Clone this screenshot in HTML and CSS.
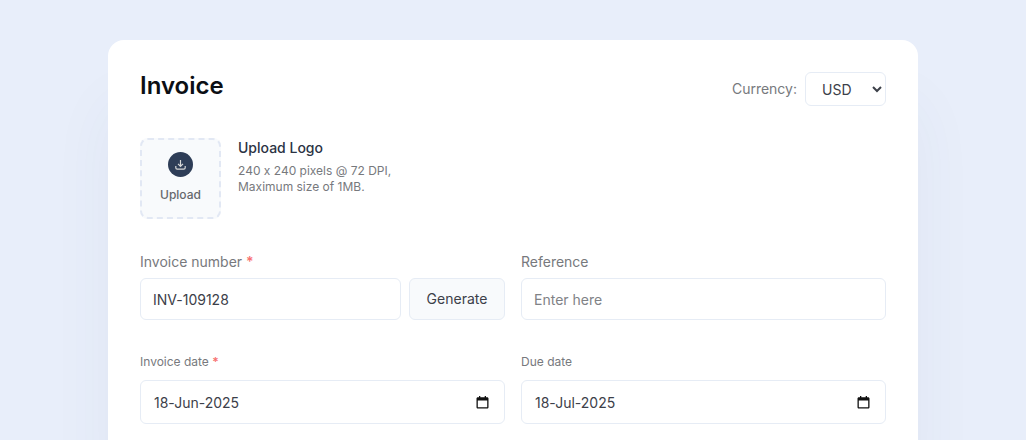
FILE: index.html
```
<!DOCTYPE html>
<html lang="en">

<head>
    <meta charset="UTF-8">
    <meta name="viewport" content="width=device-width, initial-scale=1.0">
    <title>Invoice</title>
    <link rel="stylesheet" href="styles.css">
</head>

<body>
    <form class="invoice">
        <header class="top">
            <h1>Invoice</h1>
            <div class="currency">
                <label for="currency">Currency:</label>
                <select id="currency">
                    <option>USD</option>
                    <option>EUR</option>
                    <option>GBP</option>
                </select>
            </div>
        </header>

        <section class="logo">
            <button type="button" class="upload">
                <svg width="25" height="25" viewBox="0 0 25 25" fill="none">
                    <circle cx="12.5" cy="12.5" r="12.5" fill="#2e3d57"/>
                    <path d="M12.5 8v6M10 11.8l2.5 2.5 2.5-2.5M7.8 14v1.7c0 .8.6 1.4 1.4 1.4h6.6c.8 0 1.4-.6 1.4-1.4V14" stroke="#d8d8d8" stroke-width="1.2"/>
                </svg>
                <span>Upload</span>
            </button>
            <div>
                <h2>Upload Logo</h2>
                <p>240 x 240 pixels @ 72 DPI,<br>Maximum size of 1MB.</p>
            </div>
        </section>

        <div class="row">
            <div class="field">
                <label for="number">Invoice number <span class="required">*</span></label>
                <div class="number">
                    <input id="number" type="text" value="INV-109128" required>
                    <button type="button" class="generate">Generate</button>
                </div>
            </div>
            <div class="field">
                <label for="reference">Reference</label>
                <input id="reference" type="text" placeholder="Enter here">
            </div>
        </div>

        <div class="row">
            <div class="field date">
                <label for="invoice-date">Invoice date <span class="required">*</span></label>
                <div class="date-box">
                    <input id="invoice-date" type="text" value="18-Jun-2025" required>
                    <button type="button" aria-label="Pick invoice date">
                        <svg width="13" height="13" viewBox="0 0 13 13">
                            <path d="M3 0h1.3v1.2h4.4V0H10v1.2h1.2c.7 0 1.3.6 1.3 1.3v8.7c0 .7-.6 1.3-1.3 1.3H1.8c-.7 0-1.3-.6-1.3-1.3V2.5c0-.7.6-1.3 1.3-1.3H3zM1.8 4.4v6.8h9.4V4.4z" fill="#111"/>
                        </svg>
                    </button>
                </div>
            </div>
            <div class="field date">
                <label for="due-date">Due date</label>
                <div class="date-box">
                    <input id="due-date" type="text" value="18-Jul-2025">
                    <button type="button" aria-label="Pick due date">
                        <svg width="13" height="13" viewBox="0 0 13 13">
                            <path d="M3 0h1.3v1.2h4.4V0H10v1.2h1.2c.7 0 1.3.6 1.3 1.3v8.7c0 .7-.6 1.3-1.3 1.3H1.8c-.7 0-1.3-.6-1.3-1.3V2.5c0-.7.6-1.3 1.3-1.3H3zM1.8 4.4v6.8h9.4V4.4z" fill="#111"/>
                        </svg>
                    </button>
                </div>
            </div>
        </div>
    </form>
</body>

</html>
```
FILE: styles.css
```
* {
    box-sizing: border-box;
}
body {
    display: flex;
    flex-direction: column;
    min-height: 100vh;
    margin: 0;
    padding: 40px 16px 0;
    background-color: #e8eefa;
    font-family: Inter, sans-serif;
    font-size: 14px;
    line-height: 20px;
    font-variant-ligatures: no-contextual;
    color: #77797d;
}
h1, h2, p {
    margin: 0;
}
input, select, button {
    font: inherit;
    color: #3c4049;
}
.invoice {
    flex: 1;
    width: 100%;
    max-width: 810px;
    margin: 0 auto;
    padding: 32px 32px 16px;
    background-color: white;
    border-radius: 16px 16px 0 0;
    box-shadow: 0 64px 64px rgba(60, 80, 120, 0.05);
}
.top {
    display: flex;
    justify-content: space-between;
    margin-bottom: 32px;
}
h1 {
    font-size: 24px;
    line-height: 28px;
    font-weight: 600;
    color: #0c0f14;
}
.currency {
    display: flex;
    align-items: center;
    gap: 8px;
}
select {
    width: 81px;
    height: 34px;
    padding: 0 0 0 12px;
    background-color: white;
    border: 1px solid #e6ecf5;
    border-radius: 6px;
}

/* logo upload */
.logo {
    display: flex;
    gap: 17px;
    margin-bottom: 33px;
}
.upload {
    display: flex;
    flex-direction: column;
    align-items: center;
    justify-content: center;
    gap: 8px;
    width: 81px;
    height: 81px;
    padding: 0;
    background-color: #f8fafc;
    border: 2px dashed #e2e8f4;
    border-radius: 8px;
    font-size: 12px;
    font-weight: 500;
    color: #66686c;
}
h2 {
    margin-bottom: 5px;
    font-size: 14px;
    line-height: 20px;
    font-weight: 500;
    color: #2b3344;
}
.logo p {
    font-size: 12px;
    line-height: 16px;
}

/* fields */
.row {
    display: grid;
    grid-template-columns: 1fr 1fr;
    gap: 16px;
    margin-bottom: 32px;
}
.row:last-child {
    margin-bottom: 0;
}
.field label {
    display: block;
    margin-bottom: 6px;
}
.required {
    font-weight: 600;
    color: #f87171;
}
.field input {
    width: 100%;
    height: 42px;
    padding: 0 12px;
    background-color: white;
    border: 1px solid #e6ecf5;
    border-radius: 6px;
}
.field input::placeholder {
    color: #808286;
}
.number {
    display: flex;
    gap: 8px;
}
.number input {
    flex: 1;
    min-width: 0;
}
.generate {
    width: 96px;
    background-color: #f8fafc;
    border: 1px solid #e6ecf5;
    border-radius: 6px;
}
.date label {
    margin-bottom: 8px;
    font-size: 12px;
}
.date-box {
    display: flex;
    align-items: center;
    height: 44px;
    padding: 0 15px 0 13px;
    border: 1px solid #e6ecf5;
    border-radius: 6px;
}
.field .date-box input {
    flex: 1;
    min-width: 0;
    height: 40px;
    padding: 0;
    border: none;
}
.date-box button {
    display: flex;
    padding: 0;
    background: none;
    border: none;
}
```
